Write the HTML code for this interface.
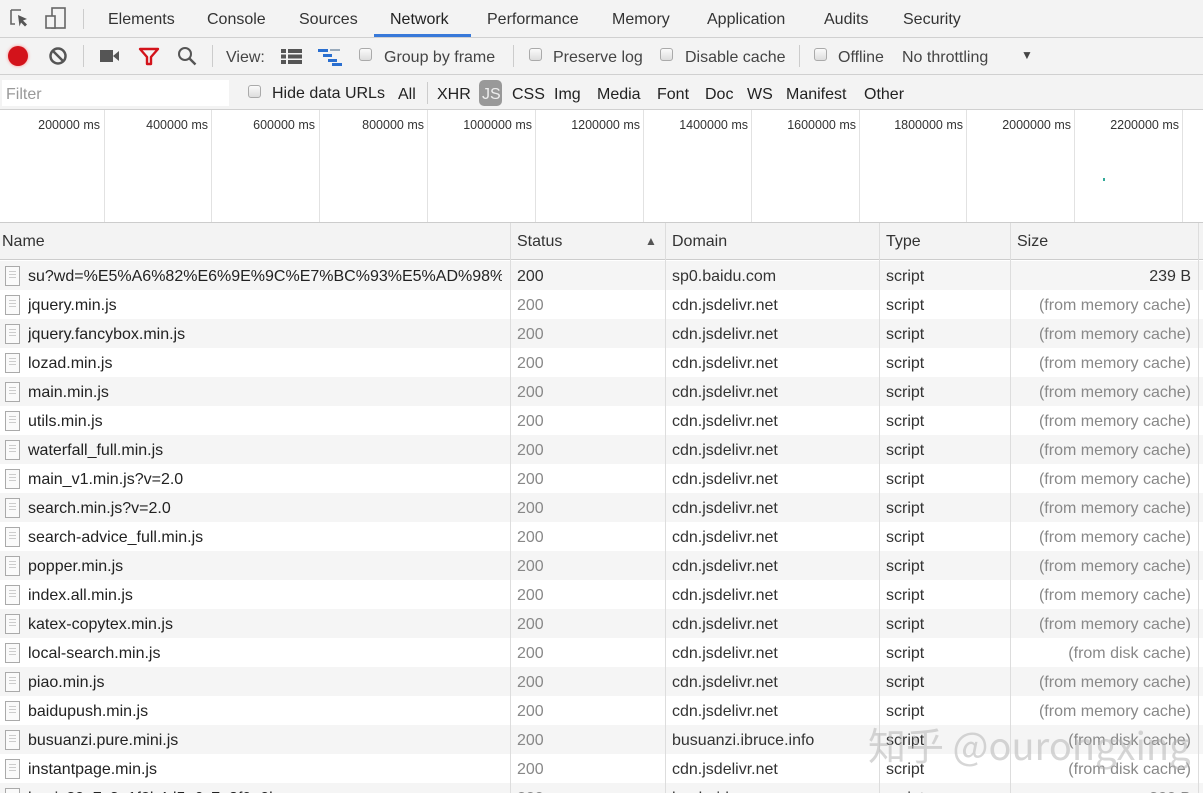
<!DOCTYPE html>
<html style="width:1203px;height:793px;overflow:hidden"><head><meta charset="utf-8"><style>
*{margin:0;padding:0;box-sizing:border-box}
body{width:1203px;height:793px;overflow:hidden;background:#fff;font-family:"Liberation Sans","Noto Sans CJK SC",sans-serif;font-size:16px;color:#333;position:relative}
.a{position:absolute;white-space:nowrap}
.bar{position:absolute;left:0;width:1203px;background:#f3f3f3;border-bottom:1px solid #d0d0d0}
.cb{position:absolute;width:13px;height:13px;border:1px solid #aaa;border-radius:3px;background:linear-gradient(#fafafa,#ddd)}
.sep{position:absolute;width:1px;background:#ccc}
.tl{position:absolute;top:110px;height:112px;width:1px;background:#e2e2e2}
.tt{position:absolute;top:118px;font-size:12.5px;color:#333}
.row{position:absolute;left:0;width:1203px;height:29px}
.row span{position:absolute;top:7px;white-space:nowrap}
.vl{position:absolute;top:223px;bottom:0;width:1px;background:#ddd}
.ic{position:absolute;left:5px;width:15px;height:20px;border:1px solid #aaa;background:#fafafa;top:5px}
.ic:after{content:"";position:absolute;left:3px;right:3px;top:4px;height:9px;background:repeating-linear-gradient(#ccc 0 1px,transparent 1px 3px)}
</style></head><body>
<div class="bar" style="top:0;height:38px"></div>
<svg class="a" style="left:8px;top:7px" width="24" height="24" viewBox="0 0 24 24"><path d="M3 3h10M3 3v14h4" fill="none" stroke="#666" stroke-width="1.6"/><path d="M10 8l9 4-4 1.5 4 4-2 2-4-4-1.5 4z" fill="#555"/></svg>
<svg class="a" style="left:44px;top:6px" width="24" height="26" viewBox="0 0 24 26"><rect x="8" y="2" width="13" height="20" fill="none" stroke="#666" stroke-width="1.6"/><rect x="2" y="10" width="9" height="12" fill="#f3f3f3" stroke="#666" stroke-width="1.6"/></svg>
<div class="sep" style="left:83px;top:9px;height:20px"></div>
<div class="a" style="left:108px;top:11px">Elements</div>
<div class="a" style="left:207px;top:11px">Console</div>
<div class="a" style="left:299px;top:11px">Sources</div>
<div class="a" style="left:390px;top:11px;color:#222">Network</div>
<div class="a" style="left:374px;top:34px;width:97px;height:3px;background:#3879d9"></div>
<div class="a" style="left:487px;top:11px">Performance</div>
<div class="a" style="left:612px;top:11px">Memory</div>
<div class="a" style="left:707px;top:11px">Application</div>
<div class="a" style="left:824px;top:11px">Audits</div>
<div class="a" style="left:903px;top:11px">Security</div>
<div class="bar" style="top:38px;height:37px"></div>
<div class="a" style="left:8px;top:46px;width:20px;height:20px;border-radius:50%;background:#d3131b;box-shadow:0 0 3px #f88"></div>
<svg class="a" style="left:48px;top:46px" width="20" height="20" viewBox="0 0 20 20"><circle cx="10" cy="10" r="7.5" fill="none" stroke="#555" stroke-width="2.5"/><path d="M5 5l10 10" stroke="#555" stroke-width="2.5"/></svg>
<div class="sep" style="left:83px;top:45px;height:22px"></div>
<svg class="a" style="left:99px;top:48px" width="22" height="16" viewBox="0 0 22 16"><rect x="1" y="2" width="13" height="12" fill="#555"/><path d="M14 8l6-5v10z" fill="#555"/></svg>
<svg class="a" style="left:138px;top:47px" width="22" height="19" viewBox="0 0 22 19"><path d="M2 2h18l-7 8v7h-4v-7z" fill="none" stroke="#d3131b" stroke-width="2.4" stroke-linejoin="round"/></svg>
<svg class="a" style="left:177px;top:46px" width="20" height="20" viewBox="0 0 20 20"><circle cx="8" cy="8" r="6" fill="none" stroke="#555" stroke-width="2"/><path d="M12.5 12.5l6 6" stroke="#555" stroke-width="2.4"/></svg>
<div class="sep" style="left:212px;top:45px;height:22px"></div>
<div class="a" style="left:226px;top:49px;color:#444">View:</div>
<svg class="a" style="left:281px;top:49px" width="21" height="15" viewBox="0 0 21 15"><g fill="#555"><rect x="0" y="0" width="5" height="4"/><rect x="7" y="0" width="14" height="4"/><rect x="0" y="5.5" width="5" height="4"/><rect x="7" y="5.5" width="14" height="4"/><rect x="0" y="11" width="5" height="4"/><rect x="7" y="11" width="14" height="4"/></g></svg>
<svg class="a" style="left:318px;top:48px" width="26" height="18" viewBox="0 0 26 18"><g fill="#2a6fd0"><rect x="0" y="1" width="10" height="3"/><rect x="5" y="6" width="9" height="3"/><rect x="10" y="11" width="9" height="3"/><rect x="14" y="15" width="10" height="3"/></g><rect x="12" y="1" width="10" height="2" fill="#9ab"/></svg>
<div class="cb" style="left:359px;top:48px"></div>
<div class="a" style="left:384px;top:49px;color:#444">Group by frame</div>
<div class="sep" style="left:513px;top:45px;height:22px"></div>
<div class="cb" style="left:529px;top:48px"></div>
<div class="a" style="left:553px;top:49px;color:#444">Preserve log</div>
<div class="cb" style="left:660px;top:48px"></div>
<div class="a" style="left:685px;top:49px;color:#444">Disable cache</div>
<div class="sep" style="left:799px;top:45px;height:22px"></div>
<div class="cb" style="left:814px;top:48px"></div>
<div class="a" style="left:838px;top:49px;color:#444">Offline</div>
<div class="a" style="left:902px;top:49px;color:#444">No throttling</div>
<div class="a" style="left:1021px;top:48px;font-size:12px;color:#444">▼</div>
<div class="bar" style="top:75px;height:35px"></div>
<div class="a" style="left:2px;top:80px;width:227px;height:26px;background:#fff"></div>
<div class="a" style="left:6px;top:86px;color:#999">Filter</div>
<div class="cb" style="left:248px;top:85px"></div>
<div class="a" style="left:272px;top:85px;color:#222">Hide data URLs</div>
<div class="a" style="left:398px;top:86px;color:#222">All</div>
<div class="sep" style="left:427px;top:82px;height:22px"></div>
<div class="a" style="left:437px;top:86px;color:#222">XHR</div>
<div class="a" style="left:479px;top:80px;width:23px;height:26px;border-radius:5px;background:#999"></div>
<div class="a" style="left:482px;top:86px;color:#eee">JS</div>
<div class="a" style="left:512px;top:86px;color:#222">CSS</div>
<div class="a" style="left:554px;top:86px;color:#222">Img</div>
<div class="a" style="left:597px;top:86px;color:#222">Media</div>
<div class="a" style="left:657px;top:86px;color:#222">Font</div>
<div class="a" style="left:705px;top:86px;color:#222">Doc</div>
<div class="a" style="left:747px;top:86px;color:#222">WS</div>
<div class="a" style="left:786px;top:86px;color:#222">Manifest</div>
<div class="a" style="left:864px;top:86px;color:#222">Other</div>
<div class="tl" style="left:104px"></div><div class="tl" style="left:211px"></div><div class="tl" style="left:319px"></div><div class="tl" style="left:427px"></div><div class="tl" style="left:535px"></div><div class="tl" style="left:643px"></div><div class="tl" style="left:751px"></div><div class="tl" style="left:859px"></div><div class="tl" style="left:966px"></div><div class="tl" style="left:1074px"></div><div class="tl" style="left:1182px"></div>
<div class="tt" style="right:1103px">200000 ms</div><div class="tt" style="right:995px">400000 ms</div><div class="tt" style="right:888px">600000 ms</div><div class="tt" style="right:779px">800000 ms</div><div class="tt" style="right:671px">1000000 ms</div><div class="tt" style="right:563px">1200000 ms</div><div class="tt" style="right:455px">1400000 ms</div><div class="tt" style="right:347px">1600000 ms</div><div class="tt" style="right:240px">1800000 ms</div><div class="tt" style="right:132px">2000000 ms</div><div class="tt" style="right:24px">2200000 ms</div>
<div class="a" style="left:1103px;top:178px;width:2px;height:3px;background:#3a9"></div>
<div class="a" style="left:0;top:222px;width:1203px;height:38px;background:#f3f3f3;border-top:1px solid #ccc;border-bottom:1px solid #ccc"></div>
<div class="a" style="left:2px;top:233px;color:#333">Name</div>
<div class="a" style="left:517px;top:233px">Status</div>
<div class="a" style="left:645px;top:234px;font-size:12px;color:#555">▲</div>
<div class="a" style="left:672px;top:233px">Domain</div>
<div class="a" style="left:886px;top:233px">Type</div>
<div class="a" style="left:1017px;top:233px">Size</div>
<div id="rows"></div>
<div class="vl" style="left:510px"></div><div class="vl" style="left:665px"></div><div class="vl" style="left:879px"></div><div class="vl" style="left:1010px"></div><div class="vl" style="left:1198px"></div>
<div class="a" style="left:868px;top:716px;font-size:38px;color:rgba(180,180,180,.55);font-family:'Noto Sans CJK SC','Liberation Sans',sans-serif">知乎 @ourongxing</div>
<script>
var d=[["su?wd=%E5%A6%82%E6%9E%9C%E7%BC%93%E5%AD%98%...","sp0.baidu.com","239 B"],
["jquery.min.js","cdn.jsdelivr.net","m"],["jquery.fancybox.min.js","cdn.jsdelivr.net","m"],["lozad.min.js","cdn.jsdelivr.net","m"],["main.min.js","cdn.jsdelivr.net","m"],["utils.min.js","cdn.jsdelivr.net","m"],["waterfall_full.min.js","cdn.jsdelivr.net","m"],["main_v1.min.js?v=2.0","cdn.jsdelivr.net","m"],["search.min.js?v=2.0","cdn.jsdelivr.net","m"],["search-advice_full.min.js","cdn.jsdelivr.net","m"],["popper.min.js","cdn.jsdelivr.net","m"],["index.all.min.js","cdn.jsdelivr.net","m"],["katex-copytex.min.js","cdn.jsdelivr.net","m"],["local-search.min.js","cdn.jsdelivr.net","d"],["piao.min.js","cdn.jsdelivr.net","m"],["baidupush.min.js","cdn.jsdelivr.net","m"],["busuanzi.pure.mini.js","busuanzi.ibruce.info","d"],["instantpage.min.js","cdn.jsdelivr.net","d"],["hm.js?0a7c3e1f2b4d5a6c7e8f9a0b","hm.baidu.com","300 B"]];
var h="";d.forEach(function(r,i){var t=261+i*29;var s=r[2]=="m"?"(from memory cache)":r[2]=="d"?"(from disk cache)":r[2];
h+='<div class="row" style="top:'+t+'px;background:'+(i%2==0?'#f5f5f5':'#fff')+'"><div class="ic"></div><span style="left:28px;color:#222;max-width:474px;overflow:hidden">'+r[0]+'</span><span style="left:517px;color:'+(i==0?'#333':'#888')+'">200</span><span style="left:672px">'+r[1]+'</span><span style="left:886px">script</span><span style="right:12px;color:'+(i==0?'#333':'#888')+'">'+s+'</span></div>';});
document.getElementById("rows").innerHTML=h;
</script>
</body></html>
